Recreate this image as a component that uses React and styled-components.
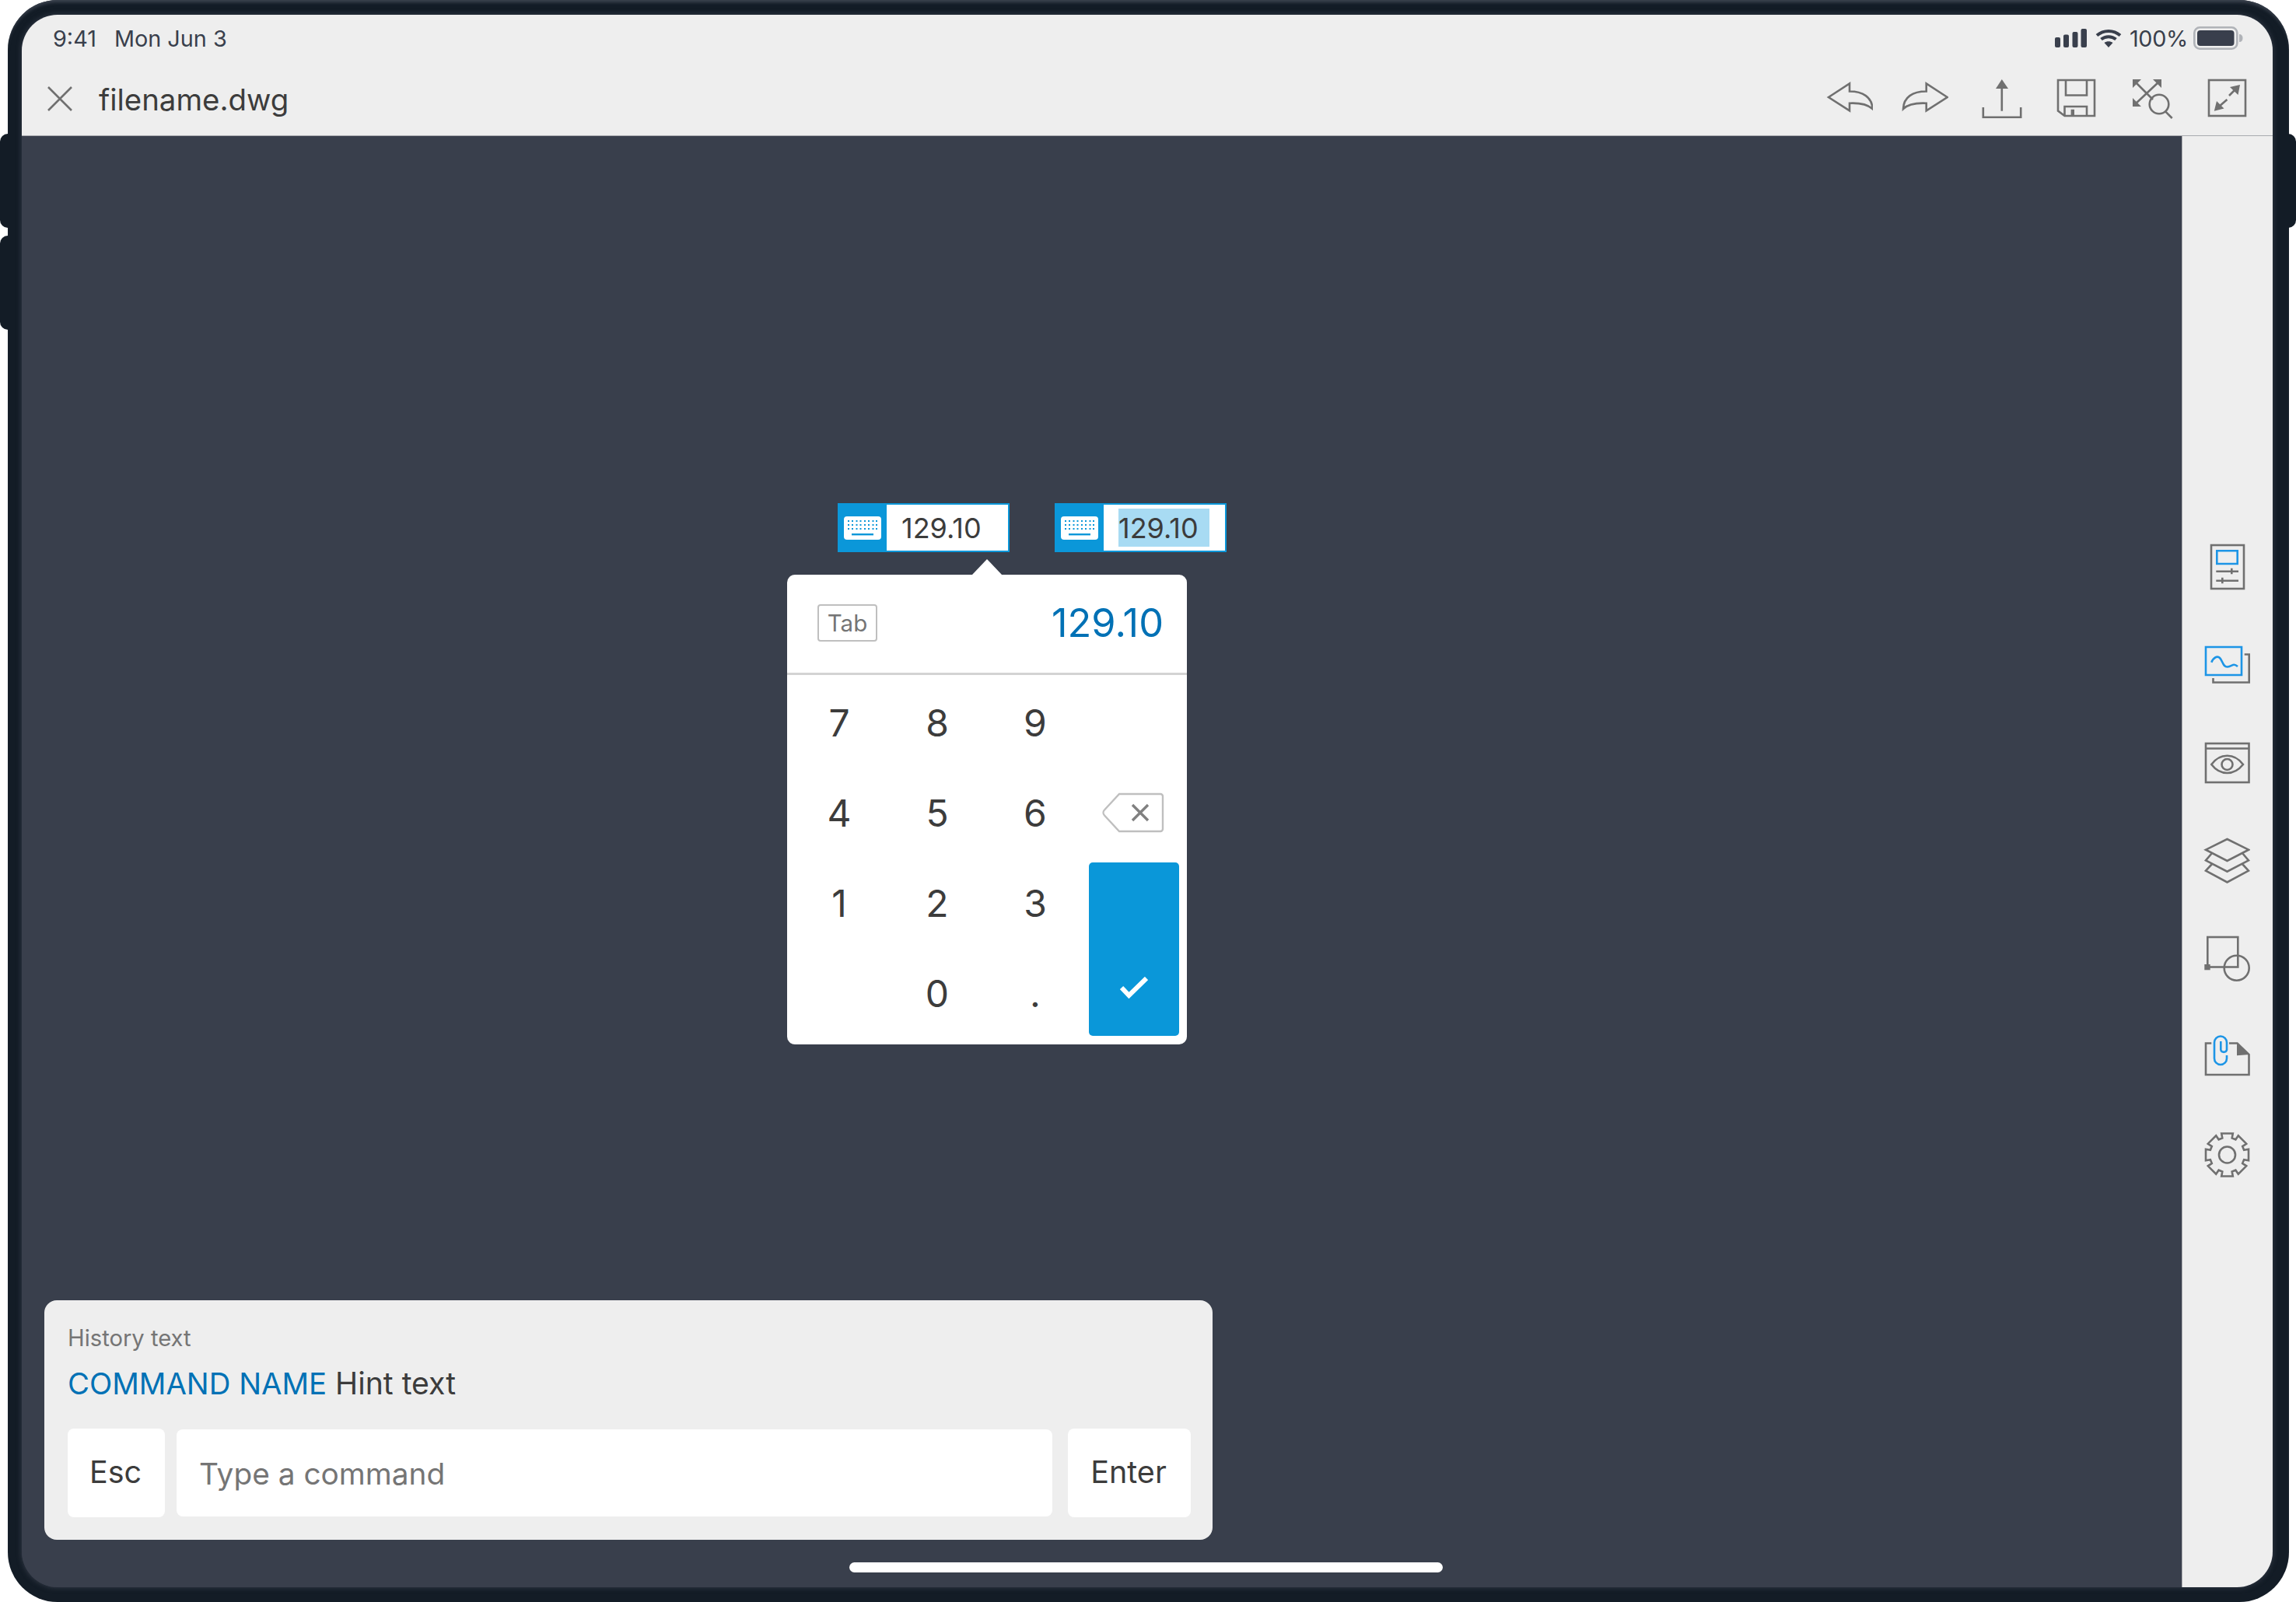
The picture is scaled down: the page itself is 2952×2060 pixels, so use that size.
import React from "react";
import styled, { createGlobalStyle } from "styled-components";

const GRAY = "#707070";
const BLUE = "#1d95e6";
const SLATE = "#393f4c";

const GlobalStyle = createGlobalStyle`
  html, body {
    margin: 0;
    padding: 0;
    background: #fff;
    overflow: hidden;
  }
  * {
    box-sizing: border-box;
  }
`;

const Device = styled.div`
  position: relative;
  width: 2933px;
  height: 2060px;
  margin-left: 10px;
  padding: 19px 21px 19px 18px;
  background: #131c26;
  border-radius: 64px;
  font-family: Inter, "Noto Sans", sans-serif;
  box-shadow: inset 0 5px 4px -2px #3d4450;
`;

const SideKey = styled.div`
  position: absolute;
  top: ${(p) => p.$top}px;
  ${(p) => (p.$right ? "right: -9px;" : "left: -10px;")}
  width: 14px;
  height: 121px;
  background: #131c26;
  border-radius: ${(p) => (p.$right ? "0 10px 10px 0" : "10px 0 0 10px")};
`;

const Screen = styled.div`
  display: flex;
  flex-direction: column;
  width: 100%;
  height: 100%;
  background: ${SLATE};
  border-radius: 46px;
  overflow: hidden;
  box-shadow: 0 0 6px 1px rgba(58, 64, 77, 0.75);
`;

const TopBar = styled.header`
  flex: none;
  height: 156px;
  background: #eeeeee;
  border-bottom: 1px solid #a8aaae;
`;

const StatusRow = styled.div`
  display: flex;
  align-items: center;
  justify-content: space-between;
  height: 58px;
  padding: 2px 38px 0 40px;
  font-size: 28.8px;
  color: ${SLATE};
`;

const StatusLeft = styled.div`
  display: flex;
  gap: 23px;
`;

const StatusRight = styled.div`
  display: flex;
  align-items: center;
`;

const SignalGap = styled.span`
  width: 11px;
`;

const Percent = styled.span`
  margin: 0 7px 0 10px;
  letter-spacing: -0.3px;
`;

const ToolRow = styled.div`
  display: flex;
  align-items: center;
  justify-content: space-between;
  height: 97px;
  padding: 2px 11px 0 33px;
`;

const FileTitle = styled.div`
  display: flex;
  align-items: center;
  gap: 34px;
  font-size: 38.4px;
  color: #3c3c3c;
`;

const FileName = styled.span`
  margin-top: 2px;
`;

const ToolGroup = styled.div`
  display: flex;
`;

const ToolSlot = styled.button`
  display: flex;
  align-items: center;
  justify-content: center;
  width: 97px;
  height: 60px;
  padding: 0;
  border: 0;
  background: none;
`;

const Main = styled.div`
  flex: 1;
  display: flex;
  min-height: 0;
`;

const Canvas = styled.main`
  flex: 1;
  display: flex;
  flex-direction: column;
  padding: 472px 0 19px;
  background: ${SLATE};
`;

const SideBar = styled.aside`
  flex: none;
  width: 117px;
  display: flex;
  flex-direction: column;
  align-items: center;
  padding-top: 491px;
  background: #eeeeee;
  border-left: 1px solid #a8aaae;
`;

const SideSlot = styled.div`
  flex: none;
  display: flex;
  align-items: center;
  justify-content: center;
  height: 126px;
  margin-left: -3px;
`;

const InputRow = styled.div`
  display: flex;
  gap: 58px;
  margin-left: 1049px;
`;

const NumberInput = styled.div`
  display: flex;
  width: 221px;
  height: 63px;
  background: #fff;
  border: 2px solid #0b97d9;
`;

const KeyTab = styled.div`
  flex: none;
  display: flex;
  align-items: center;
  justify-content: center;
  width: 61px;
  padding-right: 1px;
  background: #0b97d9;
`;

const InputValue = styled.div`
  display: flex;
  align-items: center;
  margin: 5px 0 5px 19px;
  padding: 0 ${(p) => (p.$selected ? "14px" : "0")} 0 0;
  font-size: 36px;
  color: #3c3c3c;
  background: ${(p) => (p.$selected ? "#a8dbf3" : "transparent")};
`;

const Keypad = styled.section`
  position: relative;
  flex: none;
  width: 514px;
  height: 604px;
  margin: 29px 0 0 984px;
  background: #fff;
  border-radius: 10px;
  &::before {
    content: "";
    position: absolute;
    left: 238px;
    top: -20px;
    border-left: 19px solid transparent;
    border-right: 19px solid transparent;
    border-bottom: 20px solid #fff;
  }
`;

const KeypadHead = styled.div`
  display: flex;
  align-items: center;
  justify-content: space-between;
  height: 129px;
  padding: 0 30px 3px 39px;
  border-bottom: 3px solid #d3d3d3;
`;

const TabKey = styled.div`
  display: flex;
  align-items: center;
  justify-content: center;
  width: 77px;
  height: 48px;
  font-size: 29.5px;
  color: #757575;
  border: 2px solid #bfbfbf;
  border-radius: 4px;
`;

const ReadOut = styled.div`
  font-size: 50.5px;
  color: #0071b5;
`;

const KeyGrid = styled.div`
  display: grid;
  grid-template-columns: repeat(4, 126px);
  grid-template-rows: repeat(4, 116px);
  padding: 3px 0 0 4px;
`;

const Key = styled.div`
  display: flex;
  align-items: center;
  justify-content: center;
  grid-column: ${(p) => p.$col};
  grid-row: ${(p) => p.$row};
  font-size: 48px;
  color: #3c3c3c;
`;

const Confirm = styled.div`
  grid-column: 4;
  grid-row: 3 / 5;
  display: flex;
  align-items: flex-end;
  justify-content: center;
  margin: 6px 4px 3px 6px;
  padding-bottom: 48px;
  background: #0a97d9;
  border-radius: 5px;
`;

const CommandPanel = styled.section`
  flex: none;
  width: 1502px;
  height: 308px;
  margin: auto 0 0 29px;
  padding: 30px 28px 28px 30px;
  background: #eeeeee;
  border-radius: 16px;
`;

const History = styled.div`
  height: 37px;
  font-size: 29.2px;
  line-height: 37px;
  color: #757575;
`;

const Hint = styled.div`
  height: 49px;
  margin-top: 15px;
  font-size: 39.2px;
  line-height: 49px;
  color: #3c3c3c;
`;

const CommandName = styled.span`
  font-size: 38.3px;
  color: #0071b5;
`;

const CommandRow = styled.div`
  display: flex;
  align-items: center;
  height: 114px;
  margin-top: 34px;
`;

const CommandButton = styled.div`
  flex: none;
  display: flex;
  align-items: center;
  justify-content: center;
  width: ${(p) => p.$width}px;
  height: 114px;
  padding: 0 2px 2px 0;
  font-size: 39.5px;
  color: #3c3c3c;
  background: #fff;
  border-radius: 8px;
`;

const CommandInput = styled.div`
  flex: 1;
  display: flex;
  align-items: center;
  height: 112px;
  margin: 0 20px 0 15px;
  padding-left: 29px;
  font-size: 38.8px;
  color: #757575;
  background: #fff;
  border-radius: 8px;
`;

const HomeBar = styled.div`
  flex: none;
  width: 763px;
  height: 13px;
  margin: 29px 0 0 1064px;
  background: #fff;
  border-radius: 7px;
`;

const Line = styled.svg`
  display: block;
  fill: none;
  stroke: ${(p) => p.$color || GRAY};
  stroke-width: 2.6;
`;

const Icon = ({ children }) => (
  <Line width="60" height="60" viewBox="0 0 60 60">
    {children}
  </Line>
);

const Filled = (props) => <path fill={GRAY} stroke="none" {...props} />;
const Blue = (props) => <path stroke={BLUE} {...props} />;

const Undo = () => (
  <Icon>
    <path d="M3 28 30 10.5V20.5C47 20.5 59 28 59.5 43 54 38 45 35 30 35.7V45.3Z" />
  </Icon>
);

const Redo = () => (
  <Icon>
    <path d="M58.7 28 31.7 10.5V20.5C14 20.5 2.5 28 2 43 7 38 17 35 31.7 35.7V45.3Z" />
  </Icon>
);

const Upload = () => (
  <Icon>
    <path d="M7.8 41V53.8H56.2V41M31.8 16V45.7" />
    <Filled d="M31.8 5 40 17H24Z" />
  </Icon>
);

const Save = () => (
  <Icon>
    <path d="M7 6H54V52H15.5L7 45.5ZM17 6V25.5H44V6M15.5 52V40H44V52" />
    <Filled d="M23.6 43.7H28V52H23.6Z" />
  </Icon>
);

const ZoomExtents = () => (
  <Icon>
    <path d="M8 7 32 31M41 7 8 38" />
    <Filled d="M6 5H17L6 16ZM43 5V16L32 5ZM6 40V29L17 40Z" />
    <circle cx="40" cy="37" r="12.3" />
    <path d="M48.4 46.6 56.7 55" />
  </Icon>
);

const Expand = () => (
  <Icon>
    <rect x="7" y="6" width="47" height="46" />
    <path d="M33 26 41 18M30.4 31 20 40" />
    <Filled d="M47 12 44.5 25 34 15ZM13.8 45.7 17 33 26.5 42.5Z" />
  </Icon>
);

const PropertiesIcon = () => (
  <Icon>
    <rect x="10" y="2" width="42" height="56" />
    <Blue d="M17.3 9.3H43.7V26H17.3Z" />
    <path d="M16.3 35.7H45M36.3 31.7V39.3M16.3 47.7H45M24.3 43.7V51.3" />
  </Icon>
);

const SheetsIcon = () => (
  <Icon>
    <Blue d="M3 7H49V43H3Z" />
    <Blue d="M10.3 26.7C13 20 18 18 21 21 25 25 25 33 31 32.5 37 32 38 27 44 32" />
    <path d="M52.7 16.5H58.7V52.5H12.5V47" />
  </Icon>
);

const ViewIcon = () => (
  <Icon>
    <rect x="3" y="5" width="55.5" height="50" />
    <path d="M3 11.5H58.5M10.3 32C16 24 23 20.7 30.6 20.7 38 20.7 45 24 51 32 45 39.5 38 43 30.6 43 23 43 16 39.5 10.3 32Z" />
    <circle cx="30.5" cy="32" r="7" />
  </Icon>
);

const LayersIcon = () => (
  <Icon>
    <path d="M30.5 2 58 15.7 30.5 30 3 15.7Z" />
    <path d="M11 20 3 29.3 30.5 43.7 58 29.3 50 20M11 34 3 42.7 30.5 57.5 58 42.7 50 34" />
  </Icon>
);

const ShapesIcon = () => (
  <Icon>
    <rect x="5.3" y="2" width="39" height="38.5" />
    <circle cx="42.7" cy="41.7" r="16" />
    <Filled d="M1.3 37H8.7V44.3H1.3Z" />
  </Icon>
);

const AttachIcon = () => (
  <Icon>
    <path d="M10.3 12.5H3V53H58.5V27L43.5 12.5H33" />
    <Filled d="M43 11.7 59.3 27 43 28.3Z" />
    <Blue d="M30 28V32A8 8 0 0 1 14 32V11.5A8 8 0 0 1 30 11.5V21A4 4 0 0 1 22.3 21V10" />
  </Icon>
);

// gear outline worked out from tooth count instead of typing 32 points
const gearPoints = Array.from({ length: 8 }, (_, i) => {
  const a = (i * Math.PI) / 4 - Math.PI / 2;
  const at = (r, d) =>
    `${(30.5 + r * Math.cos(a + d)).toFixed(1)},${(30 + r * Math.sin(a + d)).toFixed(1)}`;
  return [at(22.5, -0.28), at(28.5, -0.26), at(28.5, 0.26), at(22.5, 0.28)].join(" ");
}).join(" ");

const GearIcon = () => (
  <Icon>
    <polygon points={gearPoints} />
    <circle cx="30.5" cy="30" r="10.5" />
  </Icon>
);

const CloseIcon = () => (
  <Line width="32" height="32" viewBox="0 0 32 32">
    <path d="M1 1 31 31M31 1 1 31" />
  </Line>
);

const SignalIcon = () => (
  <svg width="41" height="24" viewBox="0 0 41 24" fill={SLATE}>
    <rect x="0" y="11" width="7" height="13" rx="2" />
    <rect x="11" y="7.5" width="7" height="16.5" rx="2" />
    <rect x="22.5" y="4" width="7" height="20" rx="2" />
    <rect x="33.5" y="0" width="7.5" height="24" rx="2" />
  </svg>
);

const WifiIcon = () => (
  <svg width="34" height="24" viewBox="0 0 34 24" fill="none" stroke={SLATE} strokeWidth="4">
    <path d="M2 8.5C10.5 1 23.5 1 32 8.5" />
    <path d="M7.5 13.5C13 9 21 9 26.5 13.5" />
    <path d="M17 24 11.5 18C14.5 15.5 19.5 15.5 22.5 18Z" fill={SLATE} stroke="none" />
  </svg>
);

const BatteryIcon = () => (
  <svg width="64" height="30" viewBox="0 0 64 30">
    <rect x="1.3" y="1.3" width="55" height="27.4" rx="7" fill="none" stroke="#b0b3b8" strokeWidth="2.6" />
    <rect x="5" y="5" width="47.5" height="20" rx="4" fill={SLATE} />
    <path d="M59 10C62 10 63.5 12 63.5 15 63.5 18 62 20 59 20Z" fill="#b0b3b8" />
  </svg>
);

const KeyboardIcon = () => (
  <svg width="48" height="30" viewBox="0 0 48 30">
    <rect x="0" y="0" width="48" height="30" rx="4" fill="#fff" />
    {[5, 10, 15].map((y) =>
      [5, 10, 15.5, 20.5, 26, 31, 36.5, 41].map((x) => (
        <rect key={`${x}-${y}`} x={x} y={y} width="2" height="2" fill="#0b97d9" />
      ))
    )}
    <rect x="10" y="22" width="28" height="2.4" fill="#0b97d9" />
  </svg>
);

const BackspaceIcon = () => (
  <svg width="80" height="52" viewBox="0 0 80 52" fill="none">
    <path
      d="M22 2H75A3 3 0 0 1 78 5V47A3 3 0 0 1 75 50H22L3 29.5A5 5 0 0 1 3 22.5Z"
      stroke="#bfbfbf"
      strokeWidth="2.4"
    />
    <path d="M39 16 59 36M59 16 39 36" stroke="#808080" strokeWidth="3.4" />
  </svg>
);

const CheckIcon = () => (
  <svg width="36" height="28" viewBox="0 0 36 28" fill="none">
    <path d="M2 14 11.5 24 34 2" stroke="#fff" strokeWidth="6" />
  </svg>
);

const tools = [Undo, Redo, Upload, Save, ZoomExtents, Expand];
const panels = [PropertiesIcon, SheetsIcon, ViewIcon, LayersIcon, ShapesIcon, AttachIcon, GearIcon];
const keys = [
  ["7", 1, 1], ["8", 2, 1], ["9", 3, 1],
  ["4", 1, 2], ["5", 2, 2], ["6", 3, 2],
  ["1", 1, 3], ["2", 2, 3], ["3", 3, 3],
  ["0", 2, 4], [".", 3, 4],
];

const App = () => (
  <>
    <GlobalStyle />
    <Device>
      <SideKey $top={172} />
      <SideKey $top={303} />
      <SideKey $top={172} $right />
      <Screen>
        <TopBar>
          <StatusRow>
            <StatusLeft>
              <span>9:41</span>
              <span>Mon Jun 3</span>
            </StatusLeft>
            <StatusRight>
              <SignalIcon />
              <SignalGap />
              <WifiIcon />
              <Percent>100%</Percent>
              <BatteryIcon />
            </StatusRight>
          </StatusRow>
          <ToolRow>
            <FileTitle>
              <CloseIcon />
              <FileName>filename.dwg</FileName>
            </FileTitle>
            <ToolGroup>
              {tools.map((Tool, i) => (
                <ToolSlot key={i}>
                  <Tool />
                </ToolSlot>
              ))}
            </ToolGroup>
          </ToolRow>
        </TopBar>
        <Main>
          <Canvas>
            <InputRow>
              <NumberInput>
                <KeyTab>
                  <KeyboardIcon />
                </KeyTab>
                <InputValue>129.10</InputValue>
              </NumberInput>
              <NumberInput>
                <KeyTab>
                  <KeyboardIcon />
                </KeyTab>
                <InputValue $selected>129.10</InputValue>
              </NumberInput>
            </InputRow>
            <Keypad>
              <KeypadHead>
                <TabKey>Tab</TabKey>
                <ReadOut>129.10</ReadOut>
              </KeypadHead>
              <KeyGrid>
                {keys.map(([label, col, row]) => (
                  <Key key={label} $col={col} $row={row}>
                    {label}
                  </Key>
                ))}
                <Key $col={4} $row={2}>
                  <BackspaceIcon />
                </Key>
                <Confirm>
                  <CheckIcon />
                </Confirm>
              </KeyGrid>
            </Keypad>
            <CommandPanel>
              <History>History text</History>
              <Hint>
                <CommandName>COMMAND NAME</CommandName> Hint text
              </Hint>
              <CommandRow>
                <CommandButton $width={125}>Esc</CommandButton>
                <CommandInput>Type a command</CommandInput>
                <CommandButton $width={158}>Enter</CommandButton>
              </CommandRow>
            </CommandPanel>
            <HomeBar />
          </Canvas>
          <SideBar>
            {panels.map((Panel, i) => (
              <SideSlot key={i}>
                <Panel />
              </SideSlot>
            ))}
          </SideBar>
        </Main>
      </Screen>
    </Device>
  </>
);

export default App;
